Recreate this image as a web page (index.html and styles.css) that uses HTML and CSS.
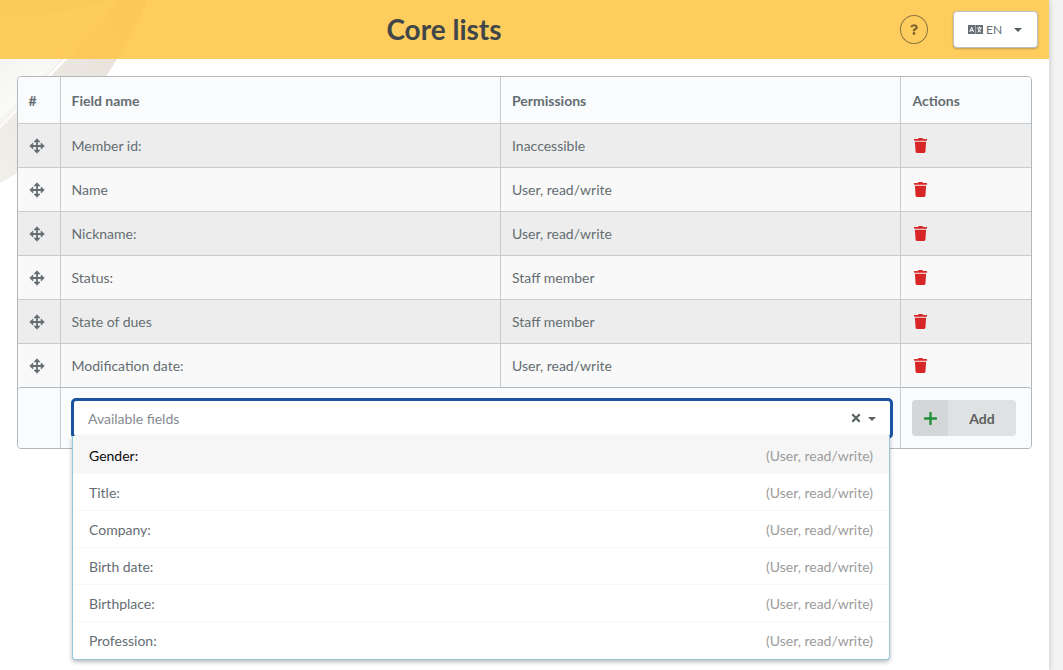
FILE: index.html
```html
<!DOCTYPE html>
<html lang="en">
<head>
<meta charset="utf-8">
<title>Core lists</title>
<link rel="stylesheet" href="styles.css">
</head>
<body>
<svg class="symbols" aria-hidden="true">
  <symbol id="move" viewBox="0 0 16 16"><path d="M8 2v12M2 8h12" fill="none" stroke="#646d72" stroke-width="1.800"/><path d="M8 .7 11 3.900H5zM8 15.300l3-3.200H5zM.7 8l3.200-3v6zM15.300 8l-3.200-3v6z" stroke="#646d72" stroke-width=".7" stroke-linejoin="round"/></symbol>
  <symbol id="trash" viewBox="0 0 448 512"><path d="M432 32H312l-9.400-18.700A24 24 0 0 0 281.100 0H166.800a23.720 23.720 0 0 0-21.400 13.300L136 32H16A16 16 0 0 0 0 48v32a16 16 0 0 0 16 16h416a16 16 0 0 0 16-16V48a16 16 0 0 0-16-16zM53.200 467a48 48 0 0 0 47.900 45h245.800a48 48 0 0 0 47.900-45L416 128H32z"/></symbol>
</svg>
<div class="page">
  <svg class="backdrop" viewBox="0 0 160 200" aria-hidden="true">
    <defs>
      <linearGradient id="sheet" x1="0" y1="0" x2=".7" y2="1"><stop offset="0" stop-color="#f0efec"/><stop offset=".6" stop-color="#fafaf9"/></linearGradient>
      <linearGradient id="cloth" x1="1" y1="0" x2="0" y2="1"><stop offset="0" stop-color="#e6dfd6"/><stop offset="1" stop-color="#f3f1ed"/></linearGradient>
      <pattern id="weave" width="4" height="4" patternUnits="userSpaceOnUse" patternTransform="rotate(-18)"><path fill="#ddd8d0" fill-opacity=".35" d="M0 0h2v1H0zM2 2h2v1H2z"/></pattern>
    </defs>
    <path fill="url(#sheet)" d="M0 0H122Q100 25 64 58L0 128z"/>
    <path fill="#e6e3dd" d="M0 0H112Q60 17 0 17z"/>
    <path fill="url(#cloth)" d="M119 0H148Q136 32 106 76Q66 148 0 183V128L64 62z"/>
    <path fill="url(#weave)" d="M119 0H148Q136 32 106 76Q66 148 0 183V128L64 62z"/>
    <path fill="none" stroke="#f7f6f4" stroke-width="3" d="M116 0 60 59 0 120"/>
    <path fill="none" stroke="#e9e7e3" d="M119 0 63 59 0 124"/>
    <path fill="none" stroke="#faf9f8" d="M122 0 67 59 0 129"/>
  </svg>
  <header class="bar">
    <h1 class="title">Core lists</h1>
    <div class="tools">
      <span class="help"><svg class="help-icon" viewBox="0 0 384 512"><path d="M202 0C122.500 0 70.500 32.700 29.700 91c-7.400 10.600-5 25 5.200 32.800l43.100 32.700c10.400 7.900 25.100 6 33.200-4.100 25-31.400 43.600-49.400 82.800-49.400 30.800 0 68.800 19.800 68.800 49.600 0 22.600-18.600 34.100-49 51.200-35.500 19.900-82.400 44.600-82.400 106.400V320c0 13.300 10.700 24 24 24h72.500c13.300 0 24-10.700 24-24v-5.800c0-42.900 125.300-44.600 125.300-160.600C377.500 66.300 286.900 0 202 0zM192 373.500c-38.200 0-69.300 31.100-69.300 69.300S153.800 512 192 512s69.300-31.100 69.300-69.200-31.100-69.300-69.300-69.300z"/></svg></span>
      <div class="lang">
        <svg class="lang-icon" viewBox="0 0 15 9"><path fill="#646d72" d="M0 0h7.300v9H0zM7.700 0H15v9H7.700z"/><path fill="none" stroke="#fff" d="m1.800 7 1.900-4.800L5.600 7M2.500 5.500h2.400M9 3h4.700M11.300 1.500V3M9.500 7.200Q12.300 5.800 12.700 3M10 4.200q.8 2.200 3.200 3"/></svg>
        <span class="lang-code">EN</span><i class="caret"></i>
      </div>
    </div>
  </header>
  <table class="fields">
    <colgroup><col class="col-move"><col class="col-name"><col class="col-perm"><col class="col-act"></colgroup>
    <thead><tr><th>#</th><th>Field name</th><th>Permissions</th><th>Actions</th></tr></thead>
    <tbody>
      <tr><td><svg class="move"><use href="#move"/></svg></td><td>Member id:</td><td>Inaccessible</td><td><svg class="trash"><use href="#trash"/></svg></td></tr>
      <tr><td><svg class="move"><use href="#move"/></svg></td><td>Name</td><td>User, read/write</td><td><svg class="trash"><use href="#trash"/></svg></td></tr>
      <tr><td><svg class="move"><use href="#move"/></svg></td><td>Nickname:</td><td>User, read/write</td><td><svg class="trash"><use href="#trash"/></svg></td></tr>
      <tr><td><svg class="move"><use href="#move"/></svg></td><td>Status:</td><td>Staff member</td><td><svg class="trash"><use href="#trash"/></svg></td></tr>
      <tr><td><svg class="move"><use href="#move"/></svg></td><td>State of dues</td><td>Staff member</td><td><svg class="trash"><use href="#trash"/></svg></td></tr>
      <tr><td><svg class="move"><use href="#move"/></svg></td><td>Modification date:</td><td>User, read/write</td><td><svg class="trash"><use href="#trash"/></svg></td></tr>
    </tbody>
    <tfoot><tr><td></td><td colspan="2" class="picker">
      <div class="dropdown">
        <span class="placeholder">Available fields</span>
        <svg class="clear" viewBox="0 0 10 10"><path d="m1.300 1.300 7.400 7.400m0-7.400-7.400 7.400"/></svg><i class="caret"></i>
        <div class="menu">
          <div class="item active"><span>Gender:</span><span class="access">(User, read/write)</span></div>
          <div class="item"><span>Title:</span><span class="access">(User, read/write)</span></div>
          <div class="item"><span>Company:</span><span class="access">(User, read/write)</span></div>
          <div class="item"><span>Birth date:</span><span class="access">(User, read/write)</span></div>
          <div class="item"><span>Birthplace:</span><span class="access">(User, read/write)</span></div>
          <div class="item"><span>Profession:</span><span class="access">(User, read/write)</span></div>
        </div>
      </div>
    </td><td><div class="add"><span class="add-icon"><svg class="plus" viewBox="0 0 12 12"><path d="M6 .8v10.400M.8 6h10.400"/></svg></span><span class="add-label">Add</span></div></td></tr></tfoot>
  </table>
</div>
</body>
</html>
```
FILE: styles.css
```css
* { box-sizing: border-box; }
body {
  margin: 0;
  height: 670px;
  overflow: hidden;
  background: #f3f3f3;
  font: 14px/20px Lato, sans-serif;
  color: #646d72;
}
.symbols { position: absolute; width: 0; height: 0; }
.page {
  position: relative;
  width: 1049px;
  height: 670px;
  background: #fff;
  box-shadow: 0 0 6px rgba(0, 0, 0, .22);
}
.backdrop { position: absolute; left: 0; top: 0; width: 160px; height: 200px; }
.bar {
  position: relative;
  height: 59px;
  display: grid;
  grid-template-columns: 888px 1fr;
  background: rgba(255, 197, 70, .87);
}
.title {
  margin: 0;
  text-align: center;
  font-size: 28px;
  line-height: 59px;
  font-weight: 700;
  color: #404648;
}
.tools { display: flex; align-items: center; gap: 25px; padding-left: 12px; }
.help {
  display: flex;
  align-items: center;
  justify-content: center;
  width: 28px;
  height: 29px;
  border: 1px solid #8b7644;
  border-radius: 50%;
}
.help-icon { width: 8px; height: 11px; fill: #7d652b; }
.lang {
  display: flex;
  align-items: center;
  width: 85px;
  height: 37px;
  padding: 0 15px 0 14px;
  border: 1px solid #bbc2c6;
  border-radius: 4px;
  background: #fff;
  box-shadow: 0 1px 2px rgba(34, 36, 38, .3);
  font-size: 12px;
}
.lang-icon { width: 15px; height: 9px; margin-top: -1px; }
.lang-code { margin-left: 3px; }
.caret {
  border: 4px solid transparent;
  border-top: 4px solid #596064;
  border-bottom: 0;
}
.lang .caret { margin-left: auto; }
.fields {
  position: relative;
  width: 1015px;
  margin: 17px 0 0 17px;
  table-layout: fixed;
  border: 1px solid #b2b7bb;
  border-radius: 4px;
  border-spacing: 0;
  background: #f9fafb;
}
.col-move { width: 42px; }
.col-name { width: 440px; }
.col-perm { width: 400px; }
.col-act { width: 131px; }
th, td {
  height: 44px;
  padding: 1px 10.500px 0;
  border-top: 1px solid #c9cccf;
  border-left: 1px solid #c9cccf;
  text-align: left;
  vertical-align: middle;
}
th:first-child, td:first-child { border-left: 0; }
th { height: 46px; padding-top: 2px; border-top: 0; background: #f9fbfd; }
th:first-child, tfoot td:first-child { border-radius: 3px 0 0 3px; }
th:last-child, tfoot td:last-child { border-radius: 0 3px 3px 0; }
th:nth-child(n+3), td:nth-child(n+3), tfoot td:last-child { padding-left: 11px; }
th:last-child { padding-left: 11.500px; }
tbody tr:nth-child(odd) { background: #ededed; }
tbody tr:nth-child(even) { background: #f9f9f9; }
tbody td:first-child { padding-left: 10px; }
tfoot td { height: 61px; padding-top: 0; background: #f9fbfd; border-top-color: #b2b7bb; }
.move {
  display: block;
  width: 16px;
  height: 16px;
  margin-left: 1px;
  fill: #646d72;
}
.trash { display: block; width: 13px; height: 15px; margin: -2px 0 0 2px; fill: #d82626; }
tfoot .picker { padding: 0 7px 0 10px; }
.dropdown {
  position: relative;
  display: flex;
  align-items: center;
  height: 41px;
  padding: 1px 14px 0;
  border: 3px solid #1b53a0;
  border-radius: 5px;
  background: #fff;
}
.placeholder { flex: 1; color: #858c90; }
.clear { width: 10px; height: 10px; margin: -2px 7px 0 0; fill: none; stroke: #596064; stroke-width: 2.200; }
.menu {
  position: absolute;
  z-index: 2;
  left: -2px;
  right: 0;
  top: 35px;
  border: 1px solid #96c8da;
  border-top: 0;
  border-radius: 0 0 4px 4px;
  background: #fff;
  box-shadow: 0 2px 4px rgba(34, 36, 38, .32);
}
.item {
  display: flex;
  justify-content: space-between;
  height: 37px;
  padding: 10px 16px 0;
  border-top: 1px solid #f8f8f8;
  line-height: 18px;
}
.item.active { background: #f6f6f6; color: #0d0d0d; }
.item:last-child { height: 38px; }
.access { color: #9c9c9c; }
.add {
  display: flex;
  width: 104px;
  height: 36px;
  border-radius: 4px;
  overflow: hidden;
  background: #e0e1e2;
  color: #5c5f60;
  font-weight: 700;
}
.add-icon { display: flex; align-items: center; justify-content: center; width: 36px; background: #d4d6d7; }
.plus { width: 13px; height: 13px; fill: none; stroke: #1f9138; stroke-width: 2.200; stroke-linecap: round; }
.add-label { flex: 1; text-align: center; line-height: 38px; }
```
